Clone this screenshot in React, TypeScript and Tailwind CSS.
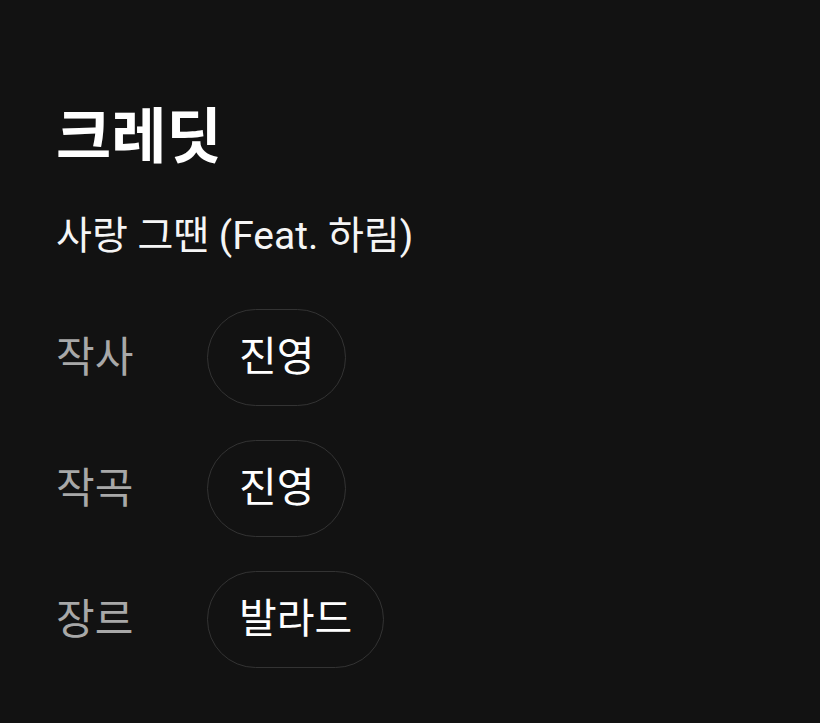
const credits = [
  { label: "작사", value: "진영" },
  { label: "작곡", value: "진영" },
  { label: "장르", value: "발라드" },
];

export default function App() {
  return (
    <div
      className="min-h-[723px] bg-[#121212] px-14 pt-[98px] text-white"
      style={{ fontFamily: "Roboto, 'Noto Sans CJK KR', sans-serif" }}
    >
      <h1 className="text-[60px] font-bold leading-[80px]">크레딧</h1>
      <p className="mt-[34px] text-[39px] leading-[48px] text-[#f5f5f5]">사랑 그땐 (Feat. 하림)</p>
      <div className="mt-[49px] flex flex-col gap-[34px]">
        {credits.map((c) => (
          <div key={c.label} className="flex items-center">
            <span className="w-[151px] text-[42px] text-[#a8a8a8]">{c.label}</span>
            <span className="flex h-[97px] items-center rounded-full border border-[#333333] px-[31px] text-[41px]">
              {c.value}
            </span>
          </div>
        ))}
      </div>
    </div>
  );
}
